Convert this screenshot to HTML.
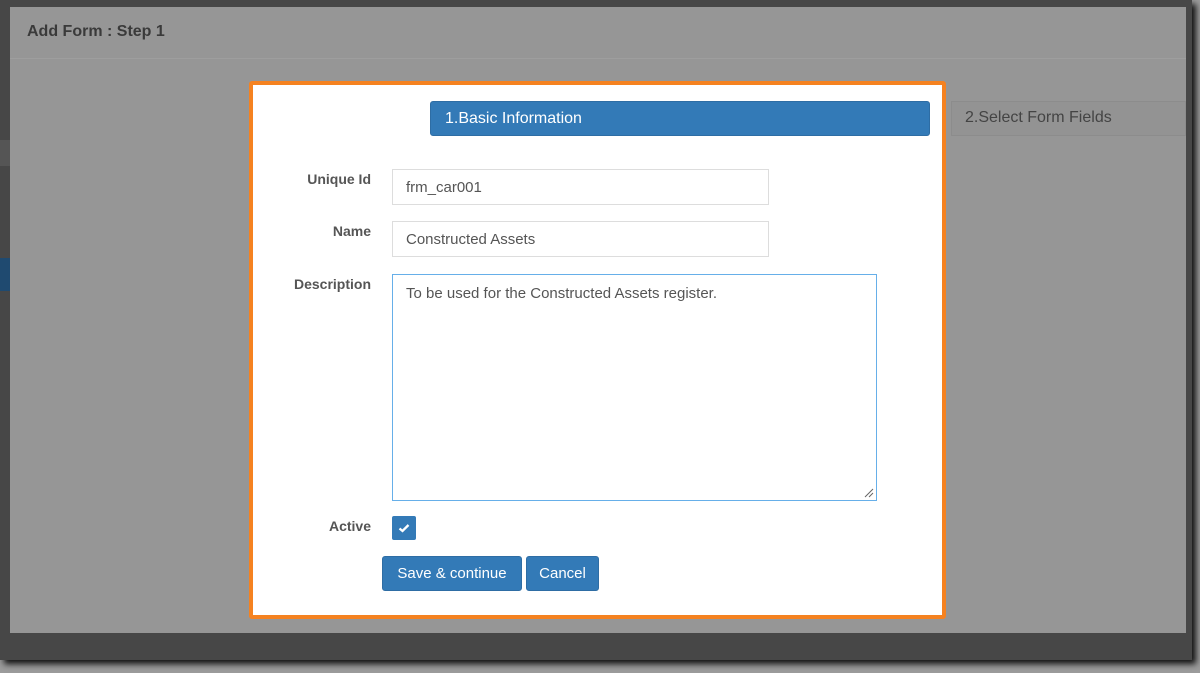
<!DOCTYPE html>
<html><head><style>
*{box-sizing:border-box;margin:0;padding:0}
body{width:1200px;height:673px;background:#9c9c9c;position:relative;overflow:hidden;font-family:"Liberation Sans",sans-serif}
.a{position:absolute}
.lbl{position:absolute;right:829px;font-weight:bold;font-size:14px;color:#555;text-align:right}
.inp{position:absolute;border:1px solid #ddd;background:#fff;font-size:15px;color:#555;padding-left:13px}
.btn{position:absolute;background:#337ab7;border:1px solid #2e6da4;border-radius:3px;color:#fff;font-size:15px;text-align:center;line-height:34px}
</style></head><body>
<div class="a" style="left:0;top:0;width:1192px;height:660px;background:#474747;box-shadow:4px 4px 6px #111"></div>
<div class="a" style="left:10px;top:7px;width:1176px;height:626px;background:#969696"></div>
<div class="a" style="left:10px;top:58px;width:1176px;height:1px;background:#9e9e9e"></div>
<div class="a" style="left:27px;top:23px;font-size:16px;font-weight:bold;color:#3a3a3a">Add Form : Step 1</div>
<div class="a" style="left:0;top:140px;width:10px;height:26px;background:#555"></div>
<div class="a" style="left:0;top:258px;width:10px;height:33px;background:#1f4a70"></div>
<div class="a" style="left:951px;top:101px;width:235px;height:35px;background:#939393;border:1px solid #8c8c8c"></div>
<div class="a" style="left:965px;top:109px;font-size:16px;color:#444">2.Select Form Fields</div>
<div class="a" style="left:249px;top:81px;width:697px;height:538px;background:#fff;border:4px solid #f58220;border-radius:3px"></div>
<div class="a" style="left:430px;top:101px;width:500px;height:35px;background:#337ab7;border:1px solid #2e6da4;border-radius:3px;color:#fff;font-size:16px;padding-left:14px;line-height:33px">1.Basic Information</div>
<div class="lbl" style="top:171px">Unique Id</div>
<div class="lbl" style="top:223px">Name</div>
<div class="lbl" style="top:276px">Description</div>
<div class="lbl" style="top:518px">Active</div>
<div class="inp" style="left:392px;top:169px;width:377px;height:36px;line-height:36px">frm_car001</div>
<div class="inp" style="left:392px;top:221px;width:377px;height:36px;line-height:36px">Constructed Assets</div>
<div class="inp" style="left:392px;top:274px;width:485px;height:227px;border-color:#66afe9;padding-top:10px;line-height:18px">To be used for the Constructed Assets register.</div>
<svg class="a" style="left:864px;top:488px" width="10" height="10"><path d="M1 9L9 1M5 9L9 5" stroke="#666" stroke-width="1"/></svg>
<div class="a" style="left:392px;top:516px;width:24px;height:24px;background:#337ab7;border-radius:2px"></div>
<svg class="a" style="left:392px;top:516px" width="24" height="24"><path d="M7.5 12.5L10.5 15L16.5 9" stroke="#fff" stroke-width="2.3" fill="none"/></svg>
<div class="btn" style="left:382px;top:556px;width:140px;height:35px">Save &amp; continue</div>
<div class="btn" style="left:526px;top:556px;width:73px;height:35px">Cancel</div>
</body></html>
